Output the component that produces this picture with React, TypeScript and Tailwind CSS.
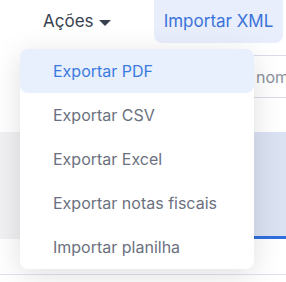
import React from 'react';

const items = ['Exportar PDF', 'Exportar CSV', 'Exportar Excel', 'Exportar notas fiscais', 'Importar planilha'];

export default function App() {
  return (
    <div
      className="relative w-[286px] h-[282px] overflow-hidden bg-white"
      style={{ fontFamily: 'Inter, "Noto Sans", sans-serif' }}
    >
      {/* toolbar */}
      <div className="flex h-[43px] items-stretch">
        <button className="ml-[43px] flex items-center gap-[5px] text-[17px] text-[#374151]">
          Ações
          <svg width="12" height="6" viewBox="0 0 12 6" className="mt-[2px]">
            <path d="M0 0h12L6 6z" fill="#374151" />
          </svg>
        </button>
        <button className="ml-auto mr-[3px] w-[129px] rounded-b-lg bg-[#e8eefc] text-[17px] text-[#3a73d9]">
          Importar XML
        </button>
      </div>

      {/* search */}
      <div className="mt-[12px] flex h-[43px]">
        <div className="ml-[200px] flex flex-1 items-center overflow-hidden border-y border-[#dadde6] pl-[56px] text-[16px] text-[#8a8f9c] whitespace-nowrap">
          nome ou CNPJ
        </div>
      </div>

      {/* tabs */}
      <div className="mt-[34px] flex h-[107px]">
        <div className="w-[140px] bg-[#f1f1f4]" />
        <div className="flex-1 border-b-[3px] border-[#2f6fde] bg-[#dbe2f2]" />
      </div>

      <div className="mt-[35px] h-px bg-[#dfe3ee]" />

      {/* dropdown menu */}
      <div className="absolute left-[20px] top-[49px] w-[234px] rounded-lg bg-white shadow-[0_6px_30px_rgba(0,0,0,0.13)]">
        {items.map((item, i) => (
          <div
            key={item}
            className={`flex h-[44px] items-center rounded-lg pl-[33px] text-[16px] ${
              i === 0 ? 'bg-[#e8effd] text-[#3b7be0]' : 'text-[#6b7180]'
            }`}
          >
            {item}
          </div>
        ))}
      </div>
    </div>
  );
}
